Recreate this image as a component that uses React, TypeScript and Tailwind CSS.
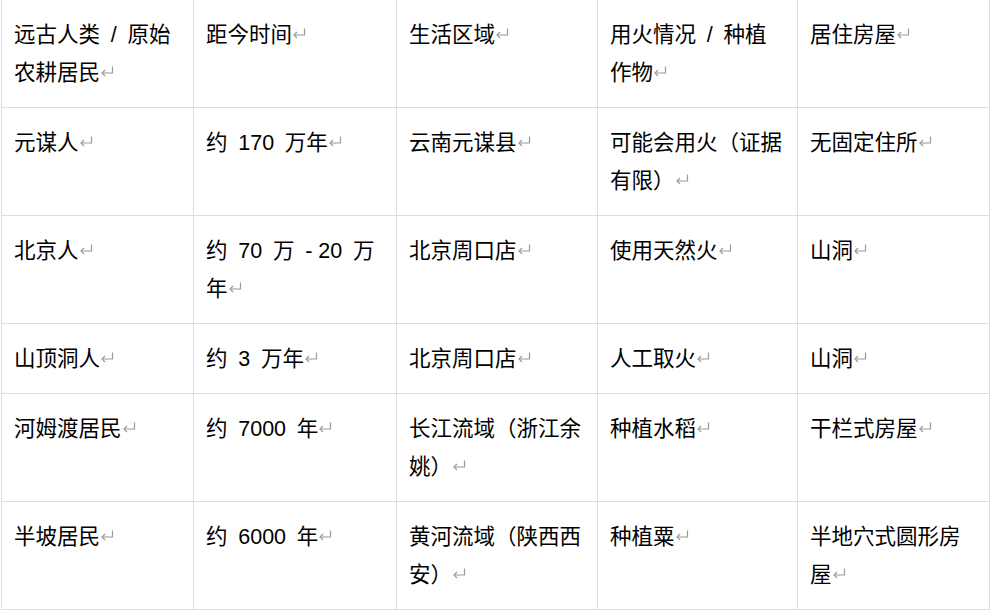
const rows: string[][] = [
  ['远古人类\u2002/\u2002原始农耕居民', '距今时间', '生活区域', '用火情况\u2002/\u2002种植作物', '居住房屋'],
  ['元谋人', '约\u2002170\u2002万年', '云南元谋县', '可能会用火（证据有限）', '无固定住所'],
  ['北京人', '约\u200270\u2002万\u2002- 20\u2002万年', '北京周口店', '使用天然火', '山洞'],
  ['山顶洞人', '约\u20023\u2002万年', '北京周口店', '人工取火', '山洞'],
  ['河姆渡居民', '约\u20027000\u2002年', '长江流域（浙江余姚）', '种植水稻', '干栏式房屋'],
  ['半坡居民', '约\u20026000\u2002年', '黄河流域（陕西西安）', '种植粟', '半地穴式圆形房屋'],
];

function ReturnMark() {
  return (
    <svg
      width="14"
      height="11"
      viewBox="0 0 14 11"
      className="inline-block align-[3px]"
      fill="none"
      stroke="#9a9a9a"
      strokeWidth="1.2"
    >
      <path d="M12.5 0.5v6.5H2" />
      <path d="M5 4l-3 3 3 3" />
    </svg>
  );
}

export default function App() {
  return (
    <div className="min-h-screen bg-white font-['Liberation_Sans','Noto_Sans_CJK_SC',sans-serif] text-black">
      <div className="ml-px grid w-fit grid-cols-[192px_203px_201px_200px_192px] border-l border-[#dddddd]">
        {rows.map((row, r) =>
          row.map((cell, c) => (
            <div
              key={`${r}-${c}`}
              className="border-r border-b border-[#dddddd] pl-3 pr-3 pt-4 pb-[15px] text-[21.5px] leading-[38px]"
            >
              {cell}
              <ReturnMark />
            </div>
          )),
        )}
      </div>
    </div>
  );
}
